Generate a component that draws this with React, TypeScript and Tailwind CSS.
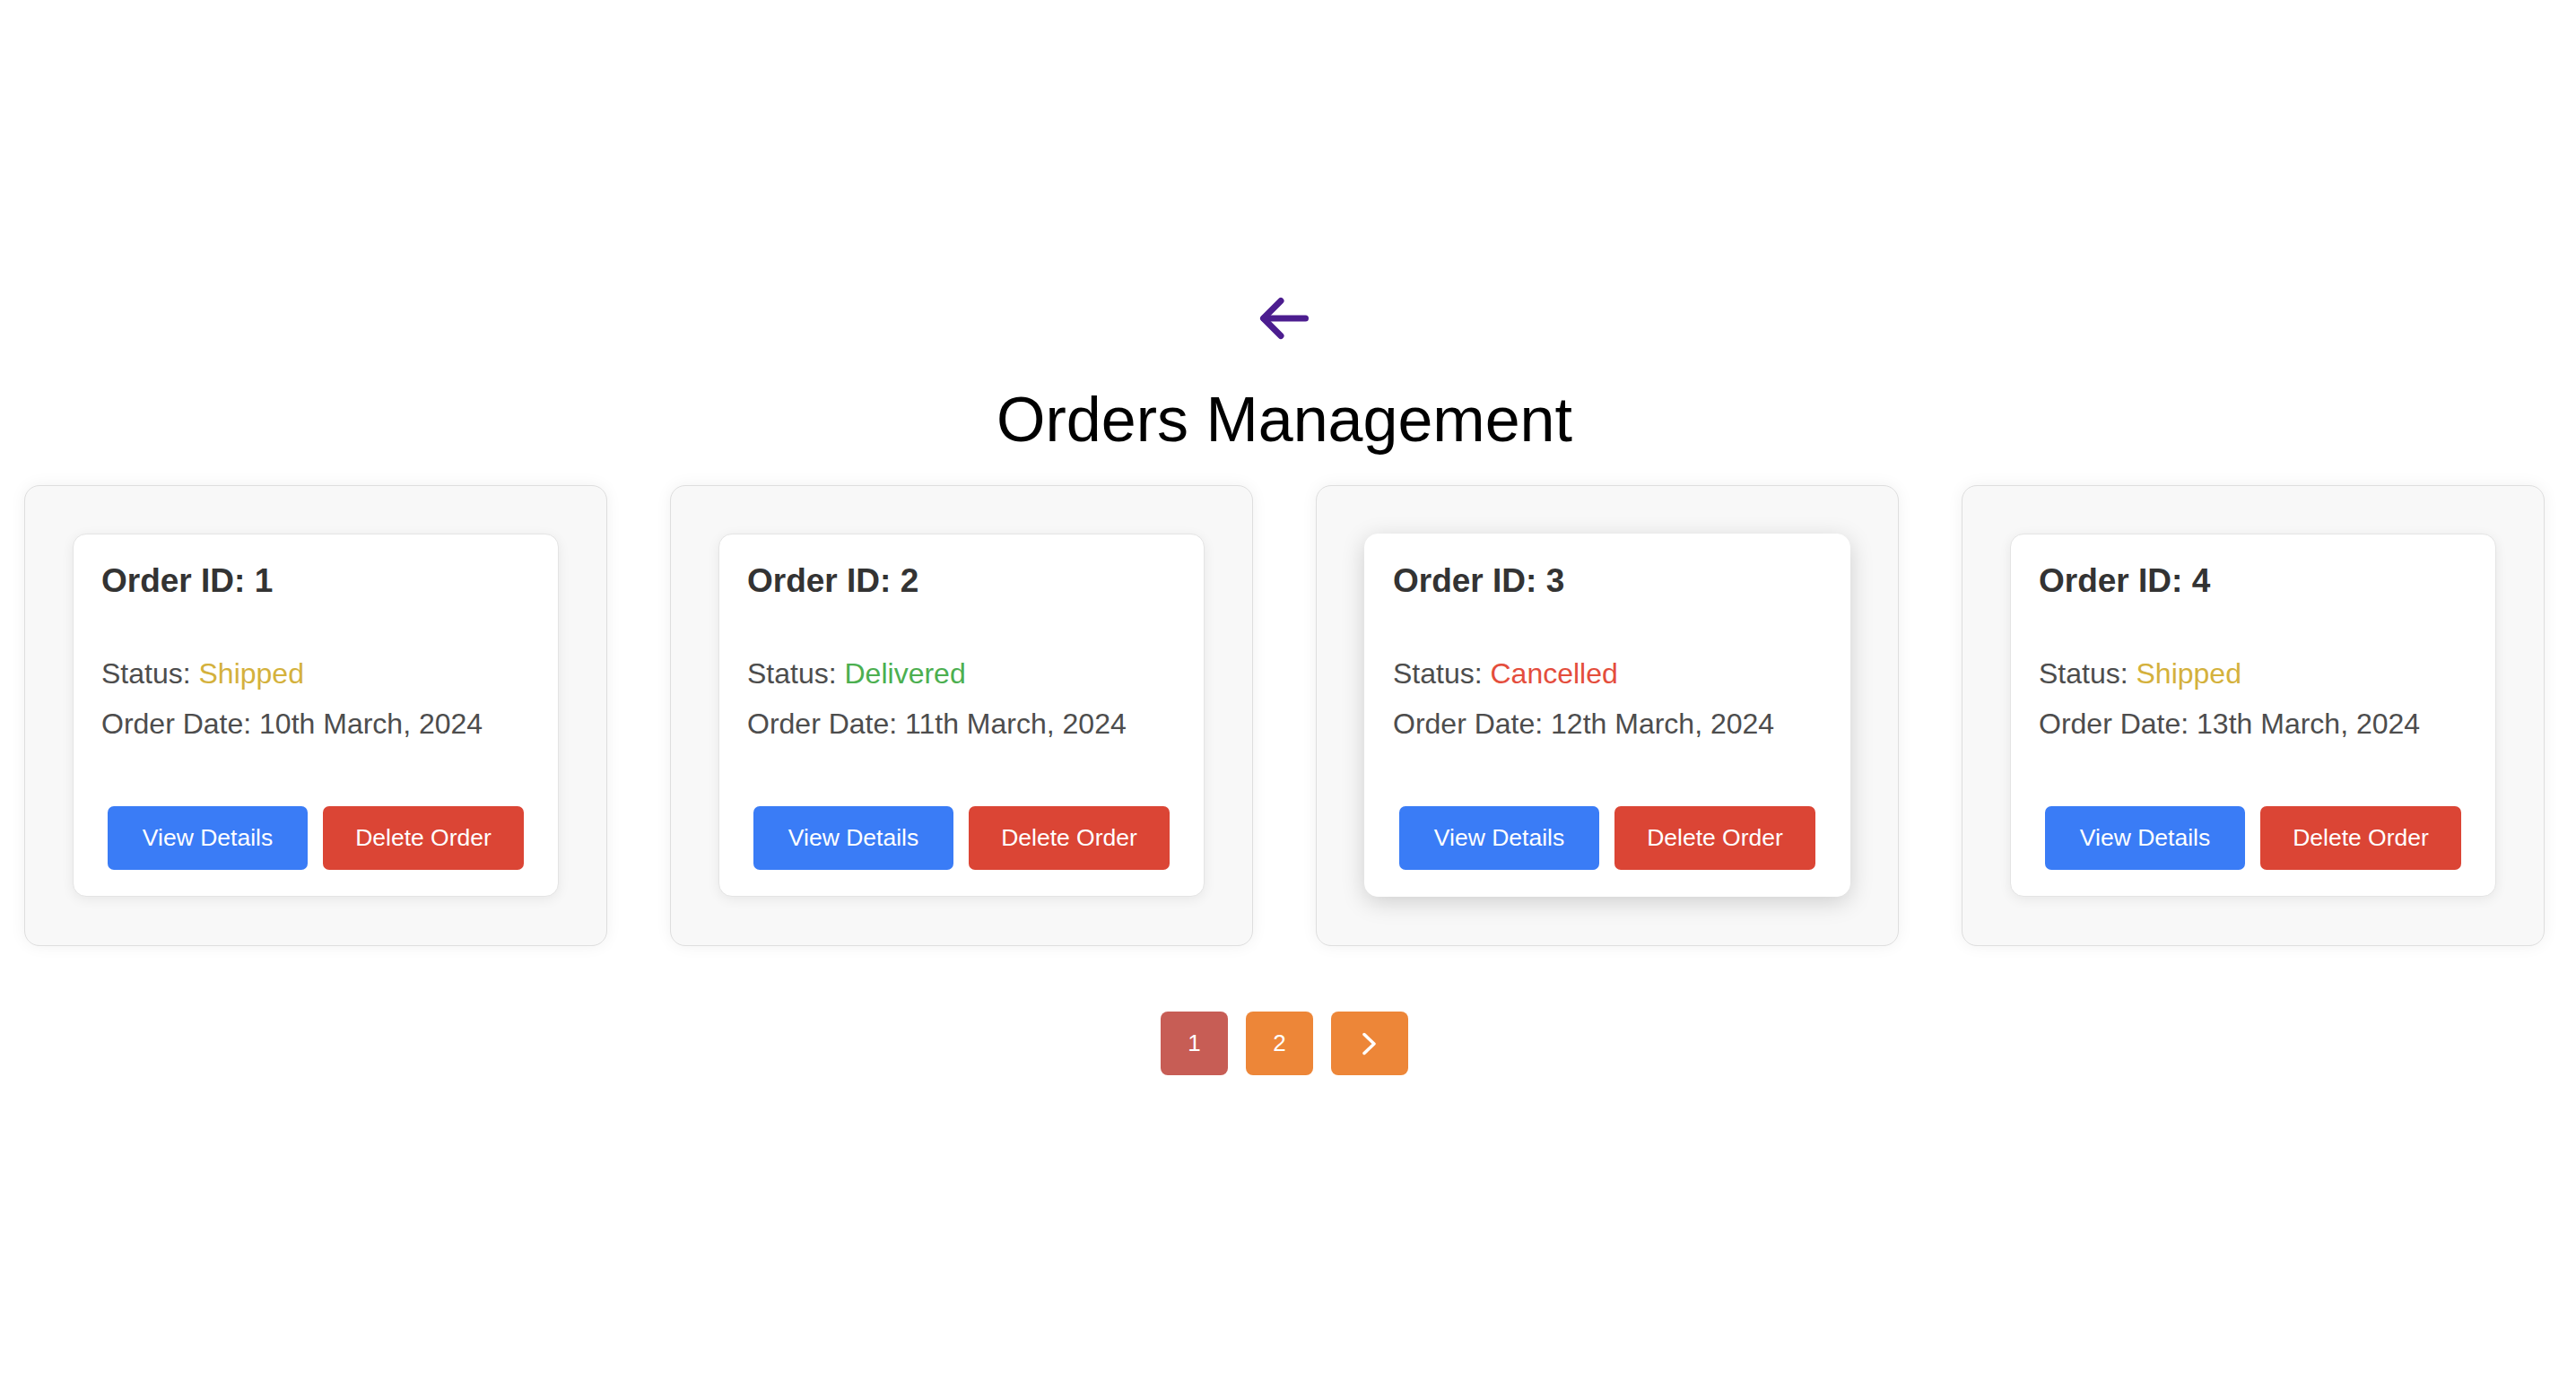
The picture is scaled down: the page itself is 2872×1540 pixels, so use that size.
type Order = {
  id: number;
  status: "Shipped" | "Delivered" | "Cancelled";
  date: string;
};

const ORDERS: Order[] = [
  { id: 1, status: "Shipped", date: "10th March, 2024" },
  { id: 2, status: "Delivered", date: "11th March, 2024" },
  { id: 3, status: "Cancelled", date: "12th March, 2024" },
  { id: 4, status: "Shipped", date: "13th March, 2024" },
];

// status → text colour
const STATUS_COLOR: Record<Order["status"], string> = {
  Shipped: "text-[#d4b13c]",
  Delivered: "text-[#4caf50]",
  Cancelled: "text-[#e44d3c]",
};

function OrderCard({ order, raised }: { order: Order; raised?: boolean }) {
  return (
    <div className="w-[650px] rounded-[17px] border border-[#dedede] bg-[#f8f8f8] px-[53px] pt-[53px] pb-[54px] shadow-[0_0_18px_rgba(0,0,0,0.06)]">
      <div
        className={
          raised
            ? "w-[542px] rounded-[15px] border border-white bg-white px-[31px] pt-[33px] pb-[29px] shadow-[0_6px_26px_rgba(0,0,0,0.17)]"
            : "w-[542px] rounded-[15px] border border-[#e4e4e4] bg-white px-[31px] pt-[33px] pb-[29px] shadow-[0_3px_14px_rgba(0,0,0,0.07)]"
        }
      >
        <h3 className="text-[37px] leading-[37px] font-bold text-[#333]">
          Order ID: {order.id}
        </h3>
        <p className="mt-[69px] text-[32px] leading-[32px] text-[#4d4d4d]">
          Status: <span className={STATUS_COLOR[order.status]}>{order.status}</span>
        </p>
        <p className="mt-[24px] text-[32px] leading-[32px] text-[#4d4d4d]">
          Order Date: {order.date}
        </p>
        <div className="mt-[76px] flex justify-center gap-[17px]">
          <button className="h-[71px] w-[223px] rounded-[7px] bg-[#3a7cf6] text-[26.5px] text-white">
            View Details
          </button>
          <button className="h-[71px] w-[224px] rounded-[7px] bg-[#db4535] text-[26.5px] text-white">
            Delete Order
          </button>
        </div>
      </div>
    </div>
  );
}

export default function App() {
  return (
    <div className="flex min-h-[1540px] w-[2864px] flex-col items-center bg-white pt-[329px] font-['Liberation_Sans',Arial,sans-serif]">
      {/* Back arrow */}
      <button aria-label="Back">
        <svg width="60" height="52" viewBox="0 0 60 52" fill="none" stroke="#4c1d8f" strokeWidth="7" strokeLinecap="round" strokeLinejoin="round">
          <path d="M53.5 26H7" />
          <path d="M26 6.5L6.5 26L26 45.5" />
        </svg>
      </button>

      <h1 className="mt-[52px] text-[70px] leading-[70px] text-black">Orders Management</h1>

      <div className="mt-[38px] flex gap-[70px]">
        {ORDERS.map((o) => (
          <OrderCard key={o.id} order={o} raised={o.id === 3} />
        ))}
      </div>

      {/* Pagination */}
      <div className="mt-[73px] flex gap-[20px]">
        <button className="flex h-[71px] w-[75px] items-center justify-center rounded-[8px] bg-[#c75d55] text-[26px] text-white">
          1
        </button>
        <button className="flex h-[71px] w-[75px] items-center justify-center rounded-[8px] bg-[#ed8638] text-[26px] text-white">
          2
        </button>
        <button className="flex h-[71px] w-[86px] items-center justify-center rounded-[8px] bg-[#ed8638]">
          <svg width="20" height="28" viewBox="0 0 20 28" fill="none" stroke="#fff" strokeWidth="3.5" strokeLinecap="round" strokeLinejoin="round">
            <path d="M4 3.5L15 14L4 24.5" />
          </svg>
        </button>
      </div>
    </div>
  );
}
